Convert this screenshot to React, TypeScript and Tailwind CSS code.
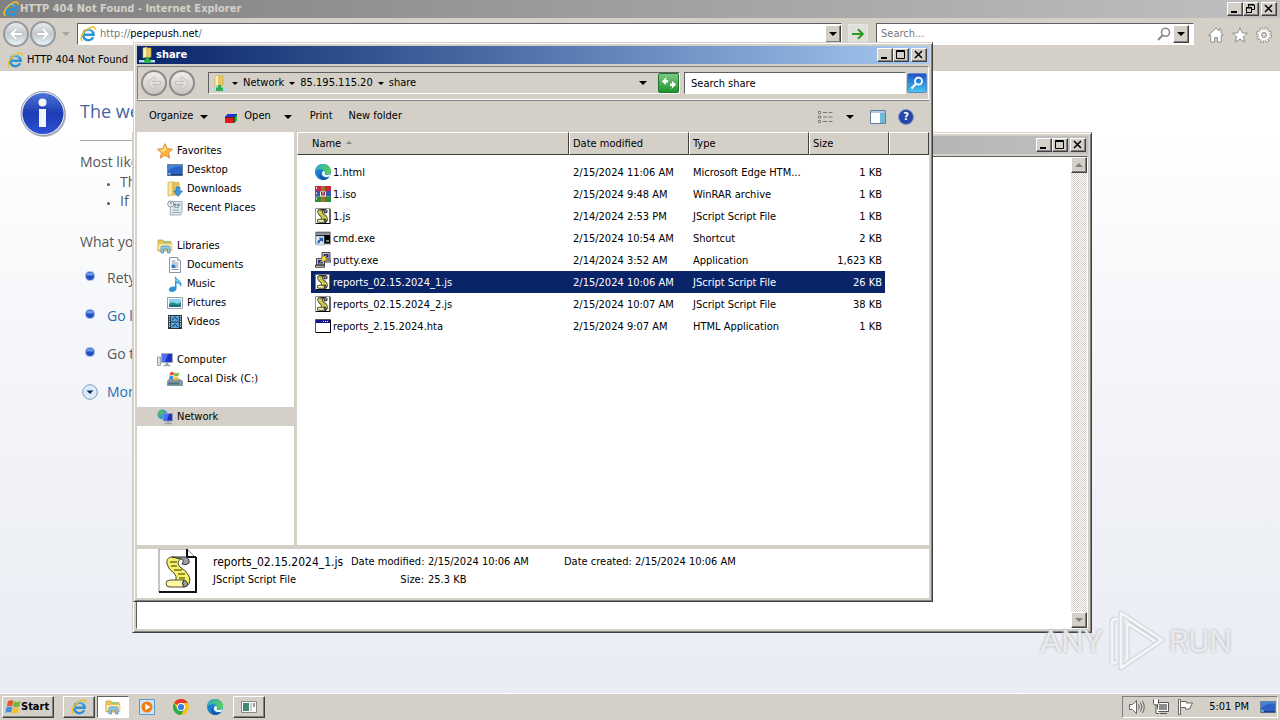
import React from 'react';
import clsx from 'clsx';

const raised =
  'border border-t-white border-l-white border-r-[#404040] border-b-[#404040] bg-[#d4d0c8] shadow-[inset_-1px_-1px_0_#808080]';
const sunken = 'border border-t-[#606060] border-l-[#606060] border-r-white border-b-white';

type IconProps = { className?: string };

function IeIcon({ className = 'size-4' }: IconProps) {
  return (
    <svg viewBox="0 0 16 16" className={clsx('shrink-0', className)} aria-hidden="true">
      <path d="M13.2 11.2A5.3 5.3 0 1 1 13.7 8.7H4.5" fill="none" stroke="#2b93d6" strokeWidth="2.4" />
      <path d="M12.2 5.4A4.8 4.8 0 0 0 4 6" fill="none" stroke="#7fd0f4" strokeWidth="1" />
      <path
        d="M2.2 14.8C-.6 12.5 2.4 7 7 3.700 11-.1 15.600.4 15.200 3.600"
        fill="none"
        stroke="#f0bf28"
        strokeWidth="1.500"
      />
    </svg>
  );
}

function EdgeIcon({ className = 'size-4' }: IconProps) {
  return (
    <svg viewBox="0 0 16 16" className={clsx('shrink-0', className)} aria-hidden="true">
      <defs>
        <linearGradient id="edgeTop" x1="0" y1="0" x2="1" y2="0.4">
          <stop offset="0" stopColor="#2aa5d8" />
          <stop offset="1" stopColor="#58cf54" />
        </linearGradient>
      </defs>
      <circle cx="8" cy="8" r="8" fill="#1b7fd0" />
      <path d="M0 8A8 8 0 0 1 16 7.500C16 10 13.500 11 11 10.500 9.500 10 10.500 9 10.200 7.800 9 4.500 2.500 4 0 8Z" fill="url(#edgeTop)" />
      <path d="M5.500 9.500C5.500 13 10 15 14.200 12.800 12.500 15.500 9.500 16.200 7 15.900 3.500 14 3.500 9 6.500 7.200 5.700 8 5.500 8.700 5.500 9.500Z" fill="#1553a4" />
      <path d="M9.800 7.500C10.500 9 9.300 9.800 10 10.400 11.500 11.500 14.500 11 15.600 9.500L14.500 12.500C10 14 6.500 12 7 8.800 7.500 7 9.300 6.500 9.800 7.500Z" fill="#eefaff" />
    </svg>
  );
}

function ChromeIcon() {
  return (
    <svg viewBox="0 0 16 16" className="size-4 shrink-0" aria-hidden="true">
      <circle cx="8" cy="8" r="8" fill="#fbc116" />
      <path d="M8 8L1.070 4A8 8 0 0 1 14.930 4H8Z" fill="#e33b2e" />
      <path d="M1.070 4A8 8 0 0 0 8 16L11.460 10 4.540 10Z" fill="#2da94f" />
      <circle cx="8" cy="8" r="4" fill="#fff" />
      <circle cx="8" cy="8" r="3.100" fill="#3b7de8" />
    </svg>
  );
}

function FolderIcon({ className = 'size-4' }: IconProps) {
  return (
    <svg viewBox="0 0 16 16" className={clsx('shrink-0', className)} aria-hidden="true">
      <path d="M1 2h5l1 1.500h7V13H1Z" fill="#e6c65c" stroke="#c09a35" strokeWidth=".7" />
      <path d="M6 3.500h6V5H6Z" fill="#8fcf8a" />
      <path d="M1 5.500h14V12H1Z" fill="#f8eaa2" stroke="#d4b452" strokeWidth=".6" />
      <path d="M4 15V9.500q0-1.500 1.500-1.500h6q1.500 0 1.500 1.500V15h-2.500v-4h-4v4Z" fill="#8ccbee" stroke="#3b8bc4" strokeWidth=".7" />
    </svg>
  );
}

function ShareIcon() {
  return (
    <svg viewBox="0 0 16 16" className="size-4 shrink-0" aria-hidden="true">
      <path d="M4 1l4-1v10l-4 1Z" fill="#fdf3b0" stroke="#c9a440" strokeWidth=".6" />
      <path d="M8 1h4v9l-4 1Z" fill="#ecc964" stroke="#c9a440" strokeWidth=".6" />
      <path d="M7 10h3v3H7Z" fill="#35a853" />
      <path d="M0 13h16v2.500H0Z" fill="#b7ddf2" />
      <path d="M5 12.500h7V16H5Z" fill="#2fae4e" />
    </svg>
  );
}

function StarIcon() {
  return (
    <svg viewBox="0 0 16 16" className="size-4 shrink-0" aria-hidden="true">
      <path
        d="M8 .7l2.200 5 5.300.5-4 3.600 1.200 5.300L8 12.300l-4.700 2.800 1.200-5.300-4-3.600 5.300-.5Z"
        fill="#fbb83c"
        stroke="#d9822b"
        strokeWidth=".9"
      />
      <path d="M8 3l1.300 3.500L5 9l-2-2 3.500-.6Z" fill="#fde7a4" />
    </svg>
  );
}

function DesktopIcon() {
  return (
    <svg viewBox="0 0 16 16" className="size-4 shrink-0" aria-hidden="true">
      <path d="M.5 2.500h15v11H.5Z" fill="#2c62c8" stroke="#6f8297" />
      <path d="M1 9Q8 3 15 5V3H1Z" fill="#4583da" />
      <path d="M1 12h14v1.500H1Z" fill="#1d3f78" />
      <circle cx="2.500" cy="12" r="1.200" fill="#7cc7ee" />
    </svg>
  );
}

function DownloadsIcon() {
  return (
    <svg viewBox="0 0 16 16" className="size-4 shrink-0" aria-hidden="true">
      <path d="M1 1.500l5-1V14l-5 1Z" fill="#f8e596" stroke="#cfa944" strokeWidth=".7" />
      <path d="M6 1.500h6V14H6Z" fill="#e5c25c" stroke="#cfa944" strokeWidth=".7" />
      <path d="M9 6h4v4h2.500L11 15.500 6.700 10H9Z" fill="#3a9ae0" stroke="#1e6cb4" strokeWidth=".6" />
    </svg>
  );
}

function RecentIcon() {
  return (
    <svg viewBox="0 0 16 16" className="size-4 shrink-0" aria-hidden="true">
      <path d="M4 1.500h11V12l-1.500 3H3Z" fill="#dce9ef" stroke="#8b9ba5" strokeWidth=".8" />
      <path d="M7 4h2v2H7zM10.500 4h2v2h-2zM7 7.500h5M6 10h6M5 12.500h8" fill="#72aacb" stroke="#7f98a5" strokeWidth=".8" />
      <circle cx="3.700" cy="4" r="3" fill="#f5f7f8" stroke="#8b9499" />
      <path d="M3.700 2v2H5" fill="none" stroke="#555" strokeWidth=".7" />
    </svg>
  );
}

function DocumentsIcon() {
  return (
    <svg viewBox="0 0 16 16" className="size-4 shrink-0" aria-hidden="true">
      <path d="M2.500.5h8l3 3v12h-11Z" fill="#fff" stroke="#8796a5" />
      <path d="M10.500.5v3h3" fill="#d5e4ef" stroke="#8796a5" strokeWidth=".7" />
      <path d="M4.500 4h4M4.500 6h7M9 8h2.500M9 10h2.500M4.500 12.500h7" stroke="#8a99a8" />
      <path d="M4.500 7.500h4v3.500h-4Z" fill="#3478bf" />
    </svg>
  );
}

function MusicIcon() {
  return (
    <svg viewBox="0 0 16 16" className="size-4 shrink-0" aria-hidden="true">
      <path d="M8 0C9 3 14 4 14.500 8.500 14.500 10 14 10.500 13.500 11 13.500 8 11.500 7 9.500 7V12.500C9.500 14.500 7.500 16 5 16 2.500 16 1.500 14.500 2 13 2.500 11 5.500 9.800 8 10.700Z" fill="#2c93d5" />
      <path d="M8.600 2C9.500 4 13 5 13.800 8 12 6 10 5.500 8.600 5.500Z" fill="#8dd3f5" />
    </svg>
  );
}

function PicturesIcon() {
  return (
    <svg viewBox="0 0 16 16" className="size-4 shrink-0" aria-hidden="true">
      <path d="M.5 2.500h15v11H.5Z" fill="#fff" stroke="#92a0ab" />
      <path d="M2 4h12v8H2Z" fill="#8bd0ec" />
      <path d="M2 9Q5 6 8 8T14 7V12H2Z" fill="#2f8a96" />
      <path d="M2 10.500Q8 9 14 10.500V12H2Z" fill="#1f6b75" />
    </svg>
  );
}

function VideosIcon() {
  return (
    <svg viewBox="0 0 16 16" className="size-4 shrink-0" aria-hidden="true">
      <path d="M1 1h14v14H1Z" fill="#26323c" />
      <path d="M4 2h8v5.500H4ZM4 8.500h8V14H4Z" fill="#5aa9de" />
      <path d="M5 6l3-3 3 3M5 13l3-3 3 3" fill="none" stroke="#245c96" strokeWidth="1.200" />
      <path d="M2.500 2v12M13.500 2v12" stroke="#e8eef2" strokeWidth="1.200" strokeDasharray="1.200 1.200" />
    </svg>
  );
}

function ComputerIcon() {
  return (
    <svg viewBox="0 0 16 16" className="size-4 shrink-0" aria-hidden="true">
      <path d="M.5 5h3v8.500h-3Z" fill="#d7dce0" stroke="#8b959d" strokeWidth=".8" />
      <path d="M4.500 1.500h11v9h-11Z" fill="#1c32c4" stroke="#a6aeb8" />
      <path d="M5 2h6L8 10H5Z" fill="#4b6ff0" />
      <path d="M8.500 11h3v2h2v1.200h-7V13h2Z" fill="#9aa4ac" />
    </svg>
  );
}

function DiskIcon() {
  return (
    <svg viewBox="0 0 16 16" className="size-4 shrink-0" aria-hidden="true">
      <path d="M0 10l2-2h11l3 2v5H0Z" fill="#88979f" />
      <path d="M1 11.500h11v2H1Z" fill="#4a7480" />
      <path d="M3 2Q5 0 7 1.500L6.500 4.500Q4.500 3.500 2.500 5Z" fill="#e8552c" />
      <path d="M7.600 1.500Q9.500 3 12 1.500L11.500 4.700Q9 5.700 7 4.500Z" fill="#7ab93c" />
      <path d="M2.400 5.600Q4.500 4 6.400 5.200L6 8.500Q4 7.500 2 8.500Z" fill="#3a8ddb" />
      <path d="M6.900 5.500Q9 6.500 11.400 5.400L11 8.600Q9 9.500 6.500 8.500Z" fill="#f6c12e" />
    </svg>
  );
}

function NetworkIcon() {
  return (
    <svg viewBox="0 0 16 16" className="size-4 shrink-0" aria-hidden="true">
      <circle cx="5.500" cy="5.500" r="5" fill="#3a9fc0" />
      <path d="M2 3Q5 0 7 2L5 5 2 7Q0 5 2 3Z" fill="#57b95c" />
      <path d="M6.500 4.500h9v7.500h-9Z" fill="#1c32c4" stroke="#98a3ae" strokeWidth=".8" />
      <path d="M7 5h5l-2 6.500H7Z" fill="#4b6ff0" />
      <path d="M10 12.500h2.500v1.500H15v1.200H7.500V14H10Z" fill="#9aa4ac" />
    </svg>
  );
}

// Rolled parchment shared by the small and the large script icon
function Scroll() {
  return (
    <>
      <path d="M13 8Q8 9 9 15 10 20 16 24 19 27 18 32L26 38Q34 36 31 27 28 21 22 18 18 14 23 9Z" fill="#f4f068" stroke="#4a4a30" />
      <path d="M14 8H27Q32 9 31 14 28 17 24 15 27 11 23 10Z" fill="#9a9da6" stroke="#333" />
      <path d="M12 31H26Q23 34 26 38H12Q8 38 8 34.500T12 31Z" fill="#fbf9a4" stroke="#4a4a30" />
      <path d="M26 31Q31 33 29 37L26 38Q23 34 26 31Z" fill="#9a9da6" stroke="#333" />
      <path d="M12 13h7M13 17h6M16 21h8M20 25h7M21 29h6" stroke="#77701c" strokeWidth="1.400" />
    </>
  );
}

function ScriptIcon() {
  return (
    <svg viewBox="0 0 16 16" className="size-4 shrink-0" aria-hidden="true">
      <path d="M.5.500h14.500v15H.5Z" fill="#fff" stroke="#777" strokeWidth=".8" />
      <path d="M15 1v14.500H1" fill="none" stroke="#000" />
      <g transform="translate(-1 -1.800) scale(.42)" strokeWidth="2.400">
        <Scroll />
      </g>
    </svg>
  );
}

function LargeScriptIcon() {
  return (
    <svg viewBox="0 0 40 44" className="h-11 w-10 shrink-0" aria-hidden="true">
      <path d="M1 0h28l9 9v34H1Z" fill="#fff" stroke="#8a8a8a" />
      <path d="M29 0v8h9M38 8v35H1" fill="none" stroke="#111" strokeWidth="2" />
      <Scroll />
    </svg>
  );
}

function WinrarIcon() {
  return (
    <svg viewBox="0 0 16 16" className="size-4 shrink-0" aria-hidden="true">
      <path d="M0 0h16v5H0Z" fill="#c8283c" />
      <path d="M0 5h16v5.500H0Z" fill="#3c55b5" />
      <path d="M0 10.500h16V16H0Z" fill="#2f8a3e" />
      <path d="M1.500 1v14" stroke="#efe2d4" strokeDasharray="2 3.300" />
      <path d="M6 0h4v16H6Z" fill="#a8702d" />
      <path d="M5 5.500h6v5H5Z" fill="#f4efe6" />
      <path d="M6.500 6v3h3V6M8 6v3" fill="none" stroke="#8b2233" />
    </svg>
  );
}

function CmdIcon() {
  return (
    <svg viewBox="0 0 16 16" className="size-4 shrink-0" aria-hidden="true">
      <path d="M.5 2h15v12H.5Z" fill="#000" stroke="#9a9a9a" />
      <path d="M1 2.500h14V5H1Z" fill="#8d919c" />
      <path d="M1 6h8v9H1Z" fill="#dfe8f4" stroke="#8aa0bb" strokeWidth=".6" />
      <path d="M2.500 13.500Q2 10 5 9.500L3.800 7.800H8V12L6.500 10.800Q4.500 11 4.300 13.500Z" fill="#2a5fae" />
      <path d="M11 11h3" stroke="#fff" />
    </svg>
  );
}

function PuttyIcon() {
  return (
    <svg viewBox="0 0 16 16" className="size-4 shrink-0" aria-hidden="true">
      <path d="M7 .5h8V7H7ZM8 8h8v2H8Z" fill="#c6c6c6" stroke="#222" strokeWidth=".8" />
      <path d="M8.700 2h4.800v3.500H8.700Z" fill="#23238e" />
      <path d="M1.500 6.500h8V13h-8ZM.5 13h9v2.300H.5Z" fill="#c6c6c6" stroke="#222" strokeWidth=".8" />
      <path d="M3 8h4.800v3.500H3Z" fill="#23238e" />
      <path d="M12 3L6 6l2 1.200-4 4 8-4-2-1.200Z" fill="#ffee22" stroke="#8a7a00" strokeWidth=".3" />
    </svg>
  );
}

function HtaIcon() {
  return (
    <svg viewBox="0 0 16 16" className="size-4 shrink-0" aria-hidden="true">
      <path d="M.5 1.500h15v13H.5Z" fill="#fff" stroke="#555" />
      <path d="M1 2h14v3H1Z" fill="#14148c" />
      <path d="M8 3.500h6" stroke="#fff" strokeDasharray="1 1" />
      <path d="M15.500 2v12.500H1" fill="none" stroke="#000" />
    </svg>
  );
}

function WindowsFlag() {
  return (
    <svg viewBox="0 0 16 16" className="size-4 shrink-0" aria-hidden="true">
      <path d="M3 2.500Q5.500.5 8.300 2L7.300 7.300Q4.500 6 1.700 7.700Z" fill="#e2582b" />
      <path d="M9 2.300Q12 3.800 15.500 2L14.300 7.500Q11 9 8 7.600Z" fill="#74b53a" />
      <path d="M1.500 8.500Q4.500 6.800 7.200 8.100L6.200 13.500Q3 12.300.3 14Z" fill="#3f8fd9" />
      <path d="M7.900 8.400Q11 10 14.200 8.400L13 13.800Q10 15.200 6.800 13.800Z" fill="#f5be2b" />
    </svg>
  );
}

function SmallArrow({ className }: IconProps) {
  return (
    <svg viewBox="0 0 8 4" className={clsx('h-1 w-2 shrink-0', className)} aria-hidden="true">
      <path d="M0 0h8L4 4Z" fill="currentColor" />
    </svg>
  );
}

function CrumbArrow() {
  return (
    <svg viewBox="0 0 6 3" className="h-[3px] w-[6px] shrink-0" aria-hidden="true">
      <path d="M0 0h6L3 3Z" />
    </svg>
  );
}

function CaptionButtons({ restore }: { restore?: boolean }) {
  return (
    <div className="flex shrink-0">
      <button aria-label="Minimize" className={clsx(raised, 'h-[14px] w-4')}>
        <svg viewBox="0 0 14 12" className="h-3 w-[14px]">
          <path d="M3 8h6v2H3Z" />
        </svg>
      </button>
      <button aria-label={restore ? 'Restore' : 'Maximize'} className={clsx(raised, 'h-[14px] w-4')}>
        <svg viewBox="0 0 14 12" className="h-3 w-[14px]" fill="none" stroke="#000">
          {restore ? (
            <path d="M5 1.500h5M4.500 4V1M5 2h5.500v4.500H8M2.500 10.500V4.500h5v5h-5M2 5h6" />
          ) : (
            <path d="M2.500 1.500h8v8h-8ZM2 2.500h9" />
          )}
        </svg>
      </button>
      <button aria-label="Close" className={clsx(raised, 'ml-[2px] h-[14px] w-4')}>
        <svg viewBox="0 0 14 12" className="h-3 w-[14px]">
          <path d="M3 2l7 7M10 2l-7 7" stroke="#000" strokeWidth="1.500" />
        </svg>
      </button>
    </div>
  );
}

function RoundArrow({ label, flip, muted }: { label: string; flip?: boolean; muted?: boolean }) {
  return (
    <button
      aria-label={label}
      className={clsx(
        'grid size-[26px] place-items-center rounded-full border-2',
        muted
          ? 'border-[#8c8c8c] bg-gradient-to-b from-[#efedea] to-[#c9c6c1]'
          : 'border-[#969a9e] bg-gradient-to-b from-[#e9eaeb] via-[#c4c8cb] to-[#e2f6fc]'
      )}
    >
      <svg viewBox="0 0 16 16" className={clsx('size-4', flip && 'rotate-180')}>
        <path
          d="M8 1.500L1.500 8 8 14.500 9.800 12.800 6.700 9.500H14.500V6.500H6.700L9.800 3.200Z"
          fill={muted ? '#e2dfdb' : '#fff'}
          stroke={muted ? '#b5b2ae' : '#b0b4b8'}
          strokeWidth=".7"
        />
      </svg>
    </button>
  );
}

function InfoIcon() {
  return (
    <svg viewBox="0 0 48 48" className="size-12 shrink-0" aria-hidden="true">
      <defs>
        <linearGradient id="infoFill" x1="0" y1="0" x2="0" y2="1">
          <stop offset="0" stopColor="#4b74d6" />
          <stop offset=".5" stopColor="#1d3cb4" />
          <stop offset="1" stopColor="#2e50d6" />
        </linearGradient>
      </defs>
      <circle cx="25" cy="24" r="22" fill="#b5b8bf" />
      <circle cx="24" cy="22.500" r="22" fill="#e8eaf0" stroke="#8f97ab" />
      <circle cx="24" cy="22.500" r="20.500" fill="url(#infoFill)" />
      <circle cx="23.500" cy="11.500" r="4" fill="#f4f5f8" />
      <path d="M20 18h7v18h-7Z" fill="#f4f5f8" />
    </svg>
  );
}

function BlueBullet() {
  return (
    <svg viewBox="0 0 10 10" className="mr-3 -mt-1 size-[10px] shrink-0" aria-hidden="true">
      <rect x=".5" y=".5" width="9" height="9" rx="4" fill="#1f50c4" stroke="#b7c8ea" />
      <path d="M1.500 4.500q0-3 3.500-3t3.500 3Z" fill="#6d9be8" />
    </svg>
  );
}

function Browser() {
  return (
    <main className="flex grow flex-col bg-white">
      <header className="bg-[#d4d0c8]">
        <div className="flex h-[18px] items-center bg-gradient-to-r from-[#808080] to-[#c0c0c0] pl-[3px] pr-[3px]">
          <IeIcon />
          <h1 className="ml-px grow pt-px text-[11px] font-bold text-[#d4d0c8]">HTTP 404 Not Found - Internet Explorer</h1>
          <CaptionButtons restore />
        </div>
        <div className="flex h-[31px] items-center pl-[3px] pr-2">
          <RoundArrow label="Back" />
          <span className="w-px" />
          <RoundArrow label="Forward" flip />
          <SmallArrow className="mx-[6px] text-[#aaa6a0]" />
          <div className={clsx(sunken, 'ml-px flex h-[22px] grow items-center bg-white pl-[2px]')}>
            <IeIcon />
            <span className="ml-1 grow pt-[2px] text-[11px] text-[#777]">
              http://<span className="text-black">pepepush.net</span>/
            </span>
            <button aria-label="Address history" className={clsx(raised, 'grid h-[18px] w-4 place-items-center')}>
              <SmallArrow />
            </button>
          </div>
          <button aria-label="Go" className="ml-[6px] grid h-5 w-5 place-items-center border border-[#e8e6e2] bg-[#e2dfda]">
            <svg viewBox="0 0 12 12" className="size-3" fill="none" stroke="#2c9b23" strokeWidth="2">
              <path d="M0 6h10.500M6 1.200L10.800 6 6 10.800" />
            </svg>
          </button>
          <div className={clsx(sunken, 'ml-2 flex h-[22px] w-[318px] items-center bg-white pl-1')}>
            <input aria-label="Search" placeholder="Search..." className="w-0 grow pt-[2px] text-[11px] outline-none placeholder:text-[#777]" />
            <svg viewBox="0 0 14 14" className="mr-[2px] size-[14px]" fill="none" stroke="#8a8a8a" strokeWidth="1.600">
              <circle cx="8.500" cy="5.300" r="4" />
              <path d="M5.600 8.300L1 13" strokeWidth="2" />
            </svg>
            <button aria-label="Search options" className={clsx(raised, 'mr-1 grid h-[18px] w-4 place-items-center')}>
              <SmallArrow />
            </button>
          </div>
          <div className="ml-[14px] flex gap-2 pt-[2px]">
            <button aria-label="Home">
              <svg viewBox="0 0 16 16" className="size-4">
                <path d="M8 1L.7 8.200h2V15h4v-4.500h2.600V15h4V8.200h2L13 5.700V2h-2v1.800Z" fill="#fff" stroke="#8d8d8d" />
              </svg>
            </button>
            <button aria-label="Favorites">
              <svg viewBox="0 0 16 16" className="size-4">
                <path d="M8 .8l2.200 5 5.200.4-4 3.500 1.200 5.300L8 12.200 3.400 15l1.200-5.300-4-3.500 5.200-.4Z" fill="#fff" stroke="#8d8d8d" />
              </svg>
            </button>
            <button aria-label="Tools">
              <svg viewBox="0 0 16 16" className="size-4">
                <circle cx="8" cy="8" r="6.400" fill="none" stroke="#8d8d8d" strokeWidth="3.200" strokeDasharray="3 2.030" />
                <circle cx="8" cy="8" r="6.100" fill="none" stroke="#fff" strokeWidth="2.200" strokeDasharray="1.600 3.190" strokeDashoffset="-.7" />
                <circle cx="8" cy="8" r="4" fill="none" stroke="#fff" strokeWidth="2.600" />
                <circle cx="8" cy="8" r="2.600" fill="#d4d0c8" stroke="#8d8d8d" strokeWidth=".8" />
              </svg>
            </button>
          </div>
        </div>
        <div className="flex h-[22px] items-center pl-[7px] text-[11px]">
          <IeIcon />
          <span className="ml-1">HTTP 404 Not Found</span>
        </div>
      </header>

      <div className="flex grow items-start bg-gradient-to-b from-white from-10% via-[#f6f7fa] via-40% to-[#e9ecf3] pl-[19px] pt-5 font-['Open_Sans','Noto_Sans',sans-serif] text-[14px] text-[#575757]">
        <InfoIcon />
        <div className="ml-[13px] w-1/2">
          <h2 className="h-[50px] border-b border-[#a9a9a9] pt-1 text-[18px] leading-8 text-[#4465a2]">The we</h2>
          <p className="mt-[11px] leading-5">Most like</p>
          <ul className="list-disc pl-10 leading-[19px] marker:text-[9px]">
            <li>Th</li>
            <li>If</li>
          </ul>
          <p className="mt-[22px] leading-5">What yo</p>
          <ul className="mt-[7px] pl-[5px] leading-[38px]">
            <li className="flex items-center">
              <BlueBullet />
              Rety
            </li>
            <li className="flex items-center">
              <BlueBullet />
              <a href="#back" className="text-[#2b6cab]">
                Go l
              </a>
            </li>
            <li className="flex items-center">
              <BlueBullet />
              Go t
            </li>
          </ul>
          <button className="ml-[2px] flex items-center leading-[38px] text-[#2b6cab]">
            <svg viewBox="0 0 16 16" className="mr-[9px] size-4" aria-hidden="true">
              <circle cx="8" cy="8" r="7.300" fill="#dceafa" stroke="#7f9cc0" />
              <path d="M4.500 6.500h7L8 10Z" fill="#0c2a5c" />
            </svg>
            Mor
          </button>
        </div>
      </div>
    </main>
  );
}

function BackWindow() {
  return (
    <section
      aria-label="Background window"
      className="absolute left-[132px] top-[132px] flex h-[501px] w-[960px] flex-col border border-l-[#d4d0c8] border-t-[#d4d0c8] border-b-[#404040] border-r-[#404040] bg-[#d4d0c8] p-[3px] shadow-[inset_1px_1px_0_#fff,inset_-1px_-1px_0_#808080]"
    >
      <div className="flex h-[18px] shrink-0 items-center justify-end bg-gradient-to-r from-[#808080] to-[#c0c0c0] pr-[2px]">
        <CaptionButtons />
      </div>
      <div className={clsx(sunken, 'mt-[2px] flex grow justify-end bg-white')}>
        <div className="flex w-4 flex-col justify-between bg-[repeating-conic-gradient(#fff_0_25%,#d4d0c8_0_50%)] bg-[length:2px_2px]">
          <button aria-label="Scroll up" className={clsx(raised, 'grid size-4 place-items-center')}>
            <SmallArrow className="rotate-180 text-[#808080]" />
          </button>
          <button aria-label="Scroll down" className={clsx(raised, 'grid size-4 place-items-center')}>
            <SmallArrow className="text-[#808080]" />
          </button>
        </div>
      </div>
    </section>
  );
}

const groups = [
  {
    name: 'Favorites',
    icon: <StarIcon />,
    items: [
      { name: 'Desktop', icon: <DesktopIcon /> },
      { name: 'Downloads', icon: <DownloadsIcon /> },
      { name: 'Recent Places', icon: <RecentIcon /> },
    ],
  },
  {
    name: 'Libraries',
    icon: <FolderIcon />,
    items: [
      { name: 'Documents', icon: <DocumentsIcon /> },
      { name: 'Music', icon: <MusicIcon /> },
      { name: 'Pictures', icon: <PicturesIcon /> },
      { name: 'Videos', icon: <VideosIcon /> },
    ],
  },
  { name: 'Computer', icon: <ComputerIcon />, items: [{ name: 'Local Disk (C:)', icon: <DiskIcon /> }] },
  { name: 'Network', icon: <NetworkIcon />, items: [], selected: true },
];

const files = [
  { name: '1.html', date: '2/15/2024 11:06 AM', type: 'Microsoft Edge HTM...', size: '1 KB', icon: <EdgeIcon /> },
  { name: '1.iso', date: '2/15/2024 9:48 AM', type: 'WinRAR archive', size: '1 KB', icon: <WinrarIcon /> },
  { name: '1.js', date: '2/14/2024 2:53 PM', type: 'JScript Script File', size: '1 KB', icon: <ScriptIcon /> },
  { name: 'cmd.exe', date: '2/15/2024 10:54 AM', type: 'Shortcut', size: '2 KB', icon: <CmdIcon /> },
  { name: 'putty.exe', date: '2/14/2024 3:52 AM', type: 'Application', size: '1,623 KB', icon: <PuttyIcon /> },
  { name: 'reports_02.15.2024_1.js', date: '2/15/2024 10:06 AM', type: 'JScript Script File', size: '26 KB', icon: <ScriptIcon />, selected: true },
  { name: 'reports_02.15.2024_2.js', date: '2/15/2024 10:07 AM', type: 'JScript Script File', size: '38 KB', icon: <ScriptIcon /> },
  { name: 'reports_2.15.2024.hta', date: '2/15/2024 9:07 AM', type: 'HTML Application', size: '1 KB', icon: <HtaIcon /> },
];

function Sidebar() {
  return (
    <nav aria-label="Folders" className="flex w-[157px] shrink-0 flex-col gap-[19px] bg-white pt-[9px]">
      {groups.map((group) => (
        <ul key={group.name}>
          <li className={clsx('flex h-[19px] items-center gap-1 pl-5', group.selected && 'bg-[#d4d0c8]')}>
            {group.icon}
            <a href="#folder" className="pt-[2px]">
              {group.name}
            </a>
          </li>
          {group.items.map((item) => (
            <li key={item.name} className="flex h-[19px] items-center gap-1 pl-[30px]">
              {item.icon}
              <a href="#folder" className="pt-[2px]">
                {item.name}
              </a>
            </li>
          ))}
        </ul>
      ))}
    </nav>
  );
}

function FileTable() {
  const head =
    'h-[23px] border border-b-[#404040] border-l-white border-r-[#404040] border-t-white bg-[#d4d0c8] pt-[2px] text-left font-normal';
  return (
    <div className="grow bg-white">
      <table className="w-full table-fixed border-separate border-spacing-0">
        <colgroup>
          <col className="w-[272px]" />
          <col className="w-[120px]" />
          <col className="w-[120px]" />
          <col className="w-[80px]" />
          <col />
        </colgroup>
        <thead>
          <tr>
            <th className={clsx(head, 'pl-[14px]')}>
              <span className="flex items-center gap-[5px]">
                Name
                <svg viewBox="0 0 6 3" className="mb-1 h-[3px] w-[6px]">
                  <path d="M0 3h6L3 0Z" fill="#8a8780" />
                </svg>
              </span>
            </th>
            <th className={clsx(head, 'pl-[3px]')}>Date modified</th>
            <th className={clsx(head, 'pl-[3px]')}>Type</th>
            <th className={clsx(head, 'pl-[3px]')}>Size</th>
            <td className={head} />
          </tr>
        </thead>
        <tbody className="before:block before:h-[6px] before:content-['']">
          {files.map((file) => {
            const cell = clsx('flex h-[22px] items-center whitespace-nowrap', file.selected && 'bg-[#0a246a] text-white');
            return (
              <tr key={file.name}>
                <td className="p-0 pl-[14px]">
                  <div className={clsx(cell, 'gap-[2px] pl-1')}>
                    {file.icon}
                    <span className="pt-[2px]">{file.name}</span>
                  </div>
                </td>
                <td className="p-0">
                  <div className={clsx(cell, 'pl-1 pt-[2px]')}>{file.date}</div>
                </td>
                <td className="p-0">
                  <div className={clsx(cell, 'pl-1 pt-[2px]')}>{file.type}</div>
                </td>
                <td className="p-0 pr-1">
                  <div className={clsx(cell, 'justify-end pr-[3px] pt-[2px]')}>{file.size}</div>
                </td>
                <td />
              </tr>
            );
          })}
        </tbody>
      </table>
    </div>
  );
}

function Explorer() {
  return (
    <section
      aria-label="share"
      className="absolute left-[133px] top-[42px] flex h-[560px] w-[800px] flex-col border border-l-[#d4d0c8] border-t-[#d4d0c8] border-b-[#404040] border-r-[#404040] bg-[#d4d0c8] p-[3px] text-[11px] shadow-[inset_1px_1px_0_#fff,inset_-1px_-1px_0_#808080]"
    >
      <div className="flex h-[18px] shrink-0 items-center bg-gradient-to-r from-[#0a246a] to-[#a6caf0] pl-[2px] pr-[2px]">
        <ShareIcon />
        <h2 className="ml-px grow pt-px font-bold text-white">share</h2>
        <CaptionButtons />
      </div>

      <div className="mt-[2px] flex h-[34px] shrink-0 items-center border border-[#808080] border-b-white border-r-white pl-[3px] pr-px shadow-[0_1px_0_#808080]">
        <RoundArrow label="Back" muted />
        <span className="w-[2px]" />
        <RoundArrow label="Forward" flip muted />
        <div className={clsx(sunken, 'ml-[13px] flex h-[22px] grow items-center gap-[5px] pl-[2px]')}>
          <ShareIcon />
          <CrumbArrow />
          <a href="#network">Network</a>
          <CrumbArrow />
          <a href="#host">85.195.115.20</a>
          <CrumbArrow />
          <a href="#share" className="grow">
            share
          </a>
          <button aria-label="Previous locations" className="grid h-5 w-4 place-items-center">
            <SmallArrow />
          </button>
          <button aria-label="Refresh" className="ml-[2px] grid h-5 w-[21px] place-items-center rounded-[2px] border border-[#1d7a2a] bg-gradient-to-b from-[#7cc983] to-[#18932a]">
            <svg viewBox="0 0 16 12" className="h-3 w-4" fill="#fff">
              <path d="M5.500 0L4.800 3H7V5.500H5V8L.8 4.500ZM10.500 12l.7-3H9V6.500h2V4l4.200 3.500Z" />
            </svg>
          </button>
        </div>
        <input aria-label="Search share" defaultValue="Search share" className={clsx(sunken, 'ml-1 h-[22px] w-[222px] bg-white pl-[6px] outline-none')} />
        <button aria-label="Search" className="ml-px grid size-[20px] place-items-center rounded-[2px] border border-[#5b86c4] bg-gradient-to-b from-[#2450c8] to-[#46c6ee]">
          <svg viewBox="0 0 14 14" className="size-[14px]" fill="none" stroke="#fff" strokeWidth="1.800">
            <circle cx="8.500" cy="5.200" r="3.500" />
            <path d="M6 7.800L1.500 12.500" strokeWidth="2.200" />
          </svg>
        </button>
      </div>

      <div className="flex h-8 shrink-0 items-center pl-3 pr-[15px] pt-px">
        <button className="flex items-center gap-[7px]">
          Organize <SmallArrow />
        </button>
        <button className="ml-4 flex items-center gap-1">
          <svg viewBox="0 0 16 16" className="size-4" aria-hidden="true">
            <path d="M1 8l3-3h9v6l-3 3H1Z" fill="#1a1a1a" />
            <path d="M4 5h9l-3 3H1Z" fill="#1c35d6" />
            <path d="M1 8.500h8.500V14H1Z" fill="#e01818" />
            <path d="M10.500 8L13 5.800V11l-2.500 2.500Z" fill="#28b428" />
            <path d="M3 2h1M6 1h1M5 3h1" stroke="#e8d800" />
          </svg>
          Open
        </button>
        <button aria-label="Open with" className="ml-[11px] grid h-5 w-3 place-items-center">
          <SmallArrow />
        </button>
        <button className="ml-4">Print</button>
        <button className="ml-4">New folder</button>
        <div className="grow" />
        <button aria-label="Views">
          <svg viewBox="0 0 16 14" className="h-[14px] w-4" fill="none" stroke="#777">
            <path d="M.5 1.500h2v2h-2ZM.5 6h2v2h-2ZM.5 10.500h2v2h-2Z" fill="#fff" />
            <path d="M5 2.500h4M10.500 2.500h4M5 7h4M10.500 7h4M5 11.500h4M10.500 11.500h4" />
          </svg>
        </button>
        <button aria-label="More views" className="mx-[10px] grid h-5 w-3 place-items-center">
          <SmallArrow />
        </button>
        <button aria-label="Preview pane" className="ml-1">
          <svg viewBox="0 0 16 14" className="h-[14px] w-4">
            <path d="M.5.500h15v13H.5Z" fill="#fff" stroke="#5f7f9c" />
            <path d="M1 1h14v2H1Z" fill="#b5c9dc" />
            <path d="M10 3h5v10h-5Z" fill="#6fb9da" />
          </svg>
        </button>
        <button aria-label="Help" className="ml-3 grid size-4 place-items-center rounded-full border border-[#8296c8] bg-[#2747a8] font-bold leading-none text-white">
          ?
        </button>
      </div>

      <div className="flex grow">
        <Sidebar />
        <div className="w-[3px] shrink-0" />
        <FileTable />
      </div>

      <footer className="mt-1 flex h-[49px] shrink-0 bg-white pl-[21px]">
        <LargeScriptIcon />
        <dl className="ml-[15px] grid grow grid-cols-[134px_73px_132px_67px_1fr] grid-rows-[18px_18px] content-start items-center gap-x-1 whitespace-nowrap pt-1">
          <dt className="text-[12px]">reports_02.15.2024_1.js</dt>
          <dt className="text-right">Date modified:</dt>
          <dd>2/15/2024 10:06 AM</dd>
          <dt className="text-right">Date created:</dt>
          <dd>2/15/2024 10:06 AM</dd>
          <dd>JScript Script File</dd>
          <dt className="text-right">Size:</dt>
          <dd>25.3 KB</dd>
        </dl>
      </footer>
    </section>
  );
}

function Watermark() {
  const letters = "font-[Roboto,sans-serif] text-[32px] leading-none text-white/70 [text-shadow:0_0_3px_#a4a6ad]";
  return (
    <div className="pointer-events-none absolute bottom-[46px] right-[48px] flex items-center gap-[3px]">
      <span className={letters}>ANY</span>
      <svg viewBox="0 0 60 66" className="h-[66px] w-[60px] opacity-70" fill="none" aria-hidden="true">
        <path d="M15 5l41 27-41 28ZM21 15v36M21 15l28 18M6 56V14q0-3 5-3M6 56l5-2" stroke="#c3c5cb" strokeWidth="5" strokeLinejoin="round" />
        <path d="M15 5l41 27-41 28ZM21 15v36M21 15l28 18M6 56V14q0-3 5-3M6 56l5-2" stroke="#f7f8fa" strokeWidth="3" strokeLinejoin="round" />
      </svg>
      <span className={letters}>RUN</span>
    </div>
  );
}

function Taskbar() {
  return (
    <footer className="relative flex h-[27px] shrink-0 items-center border-t border-white bg-[#d4d0c8] pl-[2px] pr-[2px] text-[11px]">
      <button className={clsx(raised, 'flex h-[22px] w-[52px] items-center pl-[2px] font-bold')}>
        <WindowsFlag />
        Start
      </button>
      <div className="ml-[9px] flex items-center gap-[2px]">
        <button aria-label="Internet Explorer" className={clsx(raised, 'grid h-[22px] w-8 place-items-center')}>
          <IeIcon />
        </button>
        <button aria-label="Windows Explorer" className={clsx(sunken, 'grid h-[22px] w-8 place-items-center bg-white')}>
          <FolderIcon />
        </button>
        <button aria-label="Media Player" className="grid h-[22px] w-8 place-items-center">
          <svg viewBox="0 0 16 16" className="size-4">
            <path d="M.5.500h15v15H.5Z" fill="#cfe4f5" stroke="#5b9bd0" />
            <circle cx="8" cy="8" r="5.500" fill="#f07f13" />
            <path d="M6.300 4.700L11.500 8l-5.200 3.300Z" fill="#fff" />
          </svg>
        </button>
        <button aria-label="Chrome" className="grid h-[22px] w-8 place-items-center">
          <ChromeIcon />
        </button>
        <button aria-label="Edge" className="grid h-[22px] w-8 place-items-center">
          <EdgeIcon />
        </button>
        <button aria-label="Console" className={clsx(raised, 'grid h-[22px] w-8 place-items-center')}>
          <svg viewBox="0 0 16 12" className="h-3 w-4">
            <path d="M.5.500h15v11H.5Z" fill="#fff" stroke="#8a8a8a" />
            <path d="M2 2h6v8H2Z" fill="#3f8a72" />
            <path d="M9 2h2v8H9Z" fill="#c9ccd0" />
            <path d="M13 2v4" stroke="#333" />
          </svg>
        </button>
      </div>
      <div className="grow" />
      <div className="flex h-[22px] items-center gap-2 border border-[#808080] border-b-white border-r-white pl-[6px] pr-px">
        <svg viewBox="0 0 16 16" className="size-4" fill="#fff" stroke="#666" aria-label="Volume">
          <path d="M.5 5.500h3L7.500 1.500v13l-4-4h-3Z" />
          <path d="M9.500 5.500q1.500 2.500 0 5M11.500 3.500q3 4.500 0 9M13.500 2q3.500 6 0 12" fill="none" />
        </svg>
        <svg viewBox="0 0 16 16" className="size-4" fill="#fff" stroke="#555" aria-label="Network">
          <path d="M4.500 3.500h11v9h-11Z" />
          <path d="M6 5h8v6H6Z" fill="#8d8d8d" stroke="none" />
          <path d="M7 14.500h7M.5.500v4q0 1.500 2.500 1.500t2.500-1.500v-4M3 6v8.500h3" />
        </svg>
        <svg viewBox="0 0 16 16" className="size-4" fill="#fff" stroke="#666" aria-label="Action center">
          <path d="M1.500.500h2v15h-2Z" />
          <path d="M3.500 2.500h6v1.500h6l-3 6h-4V8.500h-5Z" />
        </svg>
        <time className="ml-2">5:01 PM</time>
        <span className="ml-[3px]">
          <DesktopIcon />
        </span>
      </div>
    </footer>
  );
}

export default function App() {
  return (
    <div className="relative flex min-h-screen flex-col overflow-hidden font-['DejaVu_Sans_Condensed','DejaVu_Sans',sans-serif] text-black">
      <Browser />
      <BackWindow />
      <Explorer />
      <Watermark />
      <Taskbar />
    </div>
  );
}
